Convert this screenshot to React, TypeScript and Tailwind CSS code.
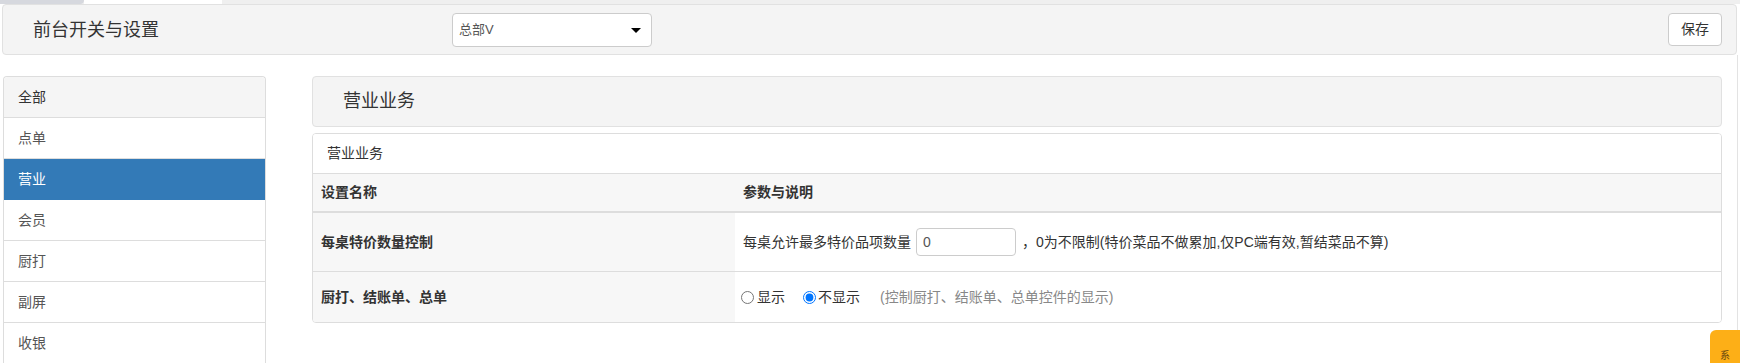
import { useState } from "react";

const MENU = ["点单", "营业", "会员", "厨打", "副屏", "收银"];

function TopBar() {
  return (
    <div className="flex h-[4px] bg-[#efefef]">
      <div className="w-[84px] rounded-br-[4px] bg-[#d6d8de]" />
      <div className="w-[138px] bg-white" />
    </div>
  );
}

function Header() {
  return (
    <div className="ml-[2px] flex h-[51px] w-[1735px] items-center rounded-[4px] border border-[#e1e1e1] bg-[#f4f4f4]">
      <div className="w-[449px] pl-[30px] text-[18px] leading-[24px] text-[#333]">前台开关与设置</div>
      <div className="relative flex h-[34px] w-[200px] items-center rounded-[4px] border border-[#cccccc] bg-white pl-[6px] text-[13px] text-[#555]">
        总部V
        <span className="absolute right-[10px] top-[14px] h-0 w-0 border-x-[5px] border-t-[5px] border-x-transparent border-t-black" />
      </div>
      <div className="flex-1" />
      <button
        type="button"
        className="mr-[14px] h-[33px] w-[54px] rounded-[4px] border border-[#cccccc] bg-white text-[14px] text-[#333]"
      >
        保存
      </button>
    </div>
  );
}

function Sidebar({ active, onPick }: { active: string; onPick: (s: string) => void }) {
  return (
    <div className="ml-[3px] h-[300px] w-[263px] shrink-0 rounded-t-[4px] border-x border-t border-[#dddddd] text-[14px]">
      <div className="flex h-[41px] items-center rounded-t-[4px] border-b border-[#dddddd] bg-[#f5f5f5] pl-[14px] text-[#333]">
        全部
      </div>
      {MENU.map((m) => (
        <div
          key={m}
          onClick={() => onPick(m)}
          className={
            m === active
              ? "flex h-[41px] cursor-pointer items-center border-b border-[#337ab7] bg-[#337ab7] pl-[14px] text-white"
              : "flex h-[41px] cursor-pointer items-center border-b border-[#dddddd] bg-white pl-[14px] text-[#555]"
          }
        >
          {m}
        </div>
      ))}
    </div>
  );
}

function SettingsTable() {
  return (
    <div className="mt-[6px] overflow-hidden rounded-[4px] border border-[#dddddd] text-[14px] text-[#333]">
      <div className="flex h-[40px] items-center border-b border-[#dddddd] bg-white pl-[14px]">营业业务</div>
      <div className="flex h-[39px] items-center border-b-2 border-[#dddddd] bg-[#f7f7f7] font-bold">
        <div className="w-[422px] pl-[8px]">设置名称</div>
        <div className="pl-[8px]">参数与说明</div>
      </div>
      <div className="flex h-[59px] border-b border-[#dddddd]">
        <div className="flex w-[422px] items-center bg-[#f7f7f7] pl-[8px] font-bold">每桌特价数量控制</div>
        <div className="flex flex-1 items-center bg-white pl-[8px]">
          每桌允许最多特价品项数量
          <input
            defaultValue="0"
            className="ml-[5px] h-[28px] w-[100px] rounded-[4px] border border-[#cccccc] px-[6px] text-[14px] text-[#555] outline-none"
          />
          <span className="ml-[6px]">，0为不限制(特价菜品不做累加,仅PC端有效,暂结菜品不算)</span>
        </div>
      </div>
      <div className="flex h-[50px]">
        <div className="flex w-[422px] items-center bg-[#f7f7f7] pl-[8px] font-bold">厨打、结账单、总单</div>
        <div className="flex flex-1 items-center bg-white pl-[6px]">
          <label className="flex items-center">
            <input type="radio" name="print" className="m-0 h-[13px] w-[13px]" />
            <span className="ml-[3px]">显示</span>
          </label>
          <label className="ml-[18px] flex items-center">
            <input type="radio" name="print" defaultChecked className="m-0 h-[13px] w-[13px]" />
            <span className="ml-[2px]">不显示</span>
          </label>
          <span className="ml-[20px] text-[#888]">(控制厨打、结账单、总单控件的显示)</span>
        </div>
      </div>
    </div>
  );
}

export default function App() {
  const [active, setActive] = useState("营业");
  return (
    <div className="relative h-[363px] w-[1740px] overflow-hidden bg-white font-['Liberation_Sans','Noto_Sans_CJK_SC',sans-serif] text-[#333]">
      <TopBar />
      <Header />
      <div className="flex">
        <div className="flex w-[1737px] pt-[21px]">
          <Sidebar active={active} onPick={setActive} />
          <div className="ml-[46px] w-[1410px]">
            <div className="flex h-[51px] items-center rounded-[4px] border border-[#e1e1e1] bg-[#f4f4f4] pl-[30px] text-[18px] text-[#333]">
              营业业务
            </div>
            <SettingsTable />
          </div>
        </div>
        <div className="h-[320px] w-[3px] border-l border-[#e3e3e3] bg-white" />
      </div>
      <div className="absolute bottom-0 right-0 flex h-[33px] w-[30px] items-end justify-center rounded-tl-[6px] bg-[#fdaf17] pb-[1px] text-[10px] leading-[12px] text-[#6b4a10]">
        系
      </div>
    </div>
  );
}
